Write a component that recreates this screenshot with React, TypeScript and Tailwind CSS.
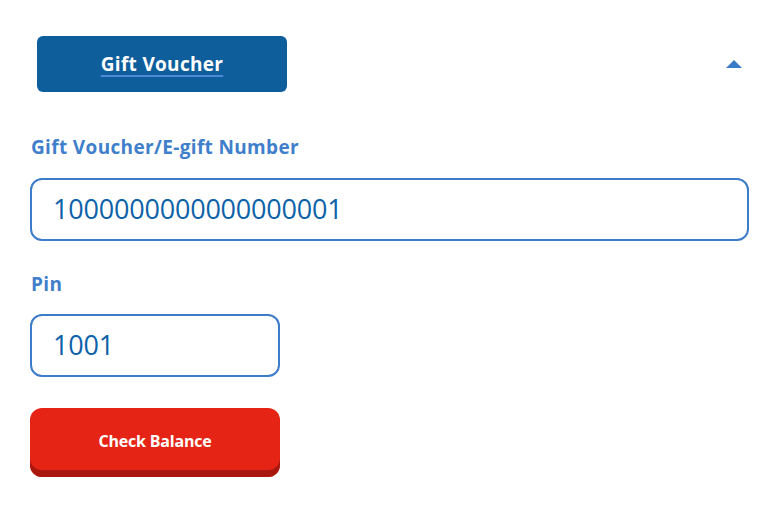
const App = () => {
  return (
    <div className="w-[778px] h-[509px] bg-white font-['Open_Sans',sans-serif]">
      <div className="flex items-center justify-between pt-9 pl-[37px] pr-9">
        <button className="w-[250px] h-14 rounded-md bg-[#0f5e9c] text-white text-[19px] font-bold tracking-[0.3px] underline decoration-[#4a8ad6] decoration-2 underline-offset-4">
          Gift Voucher
        </button>
        <svg width="16" height="10" viewBox="0 0 16 10">
          <path d="M0 9 L8 1 L16 9 Z" fill="#3a7bc8" />
        </svg>
      </div>

      <div className="flex flex-col pl-[30px] pr-[29px] pt-[43px]">
        <label className="h-6 text-[19px] font-bold text-[#3f7fcb] tracking-[0.35px] pl-px leading-6">
          Gift Voucher/E-gift Number
        </label>
        <div className="mt-[19px] h-[63px] w-full rounded-xl border-2 border-[#3c7cc8] flex items-center pl-[21px]">
          <span className="text-[27px] text-[#0d62a8] tracking-[-0.2px]">1000000000000000001</span>
        </div>

        <label className="mt-[31px] h-6 text-[19px] font-bold text-[#3f7fcb] tracking-[0.35px] pl-px leading-6">Pin</label>
        <div className="mt-[18px] h-[63px] w-[250px] rounded-xl border-2 border-[#3c7cc8] flex items-center pl-[21px]">
          <span className="text-[27px] text-[#0d62a8] tracking-[-0.2px]">1001</span>
        </div>

        <button className="mt-[31px] w-[250px] h-[69px] rounded-xl bg-[#e52416] shadow-[inset_0_-7px_0_#a8180e] text-white text-[16px] font-bold tracking-[-0.2px] pb-1">
          Check Balance
        </button>
      </div>
    </div>
  )
}

export default App
